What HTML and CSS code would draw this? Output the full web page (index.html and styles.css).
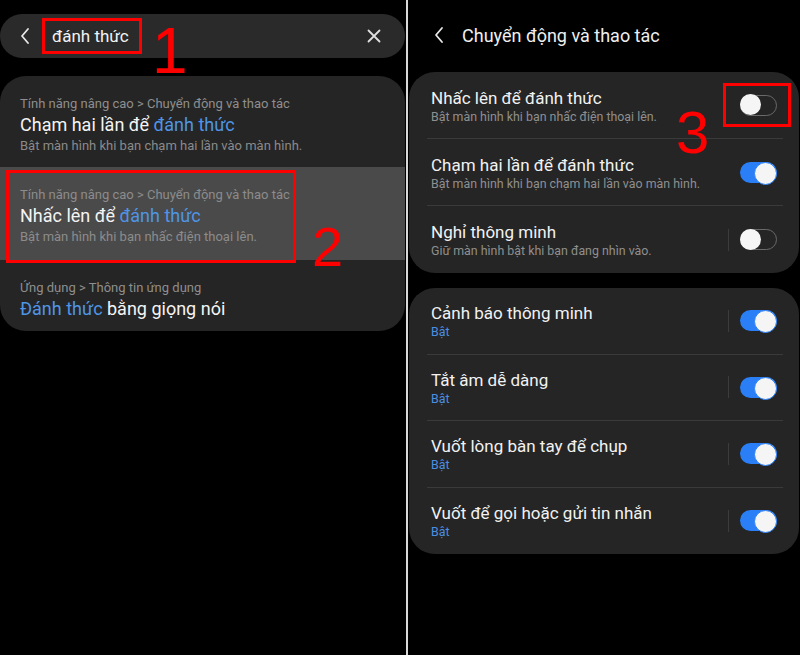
FILE: index.html
```html
<!DOCTYPE html>
<html lang="vi">
<head>
<meta charset="utf-8">
<title>Đánh thức</title>
<link rel="stylesheet" href="styles.css">
</head>
<body>
<div class="screen">
  <section class="pane left">
    <div class="search">
      <svg class="chev" width="12" height="18" viewBox="0 0 12 18"><path d="M9 2 L3 9 L9 16" fill="none" stroke="#e8e8e8" stroke-width="1.8" stroke-linecap="round" stroke-linejoin="round"/></svg>
      <span class="query">đánh thức</span>
      <svg class="close" width="14" height="14" viewBox="0 0 14 14"><path d="M1.5 1.5 L12.5 12.5 M12.5 1.5 L1.5 12.5" stroke="#e0e0e0" stroke-width="1.8" stroke-linecap="round"/></svg>
      <div class="mark mark1"></div>
      <span class="num num1">1</span>
    </div>
    <div class="results">
      <div class="result">
        <div class="crumb">Tính năng nâng cao &gt; Chuyển động và thao tác</div>
        <div class="rtitle">Chạm hai lần để <span class="hl">đánh thức</span></div>
        <div class="rsub">Bật màn hình khi bạn chạm hai lần vào màn hình.</div>
      </div>
      <div class="result active">
        <div class="crumb">Tính năng nâng cao &gt; Chuyển động và thao tác</div>
        <div class="rtitle">Nhấc lên để <span class="hl">đánh thức</span></div>
        <div class="rsub">Bật màn hình khi bạn nhấc điện thoại lên.</div>
        <div class="mark mark2"></div>
        <span class="num num2">2</span>
      </div>
      <div class="result last">
        <div class="crumb">Ứng dụng &gt; Thông tin ứng dụng</div>
        <div class="rtitle"><span class="hl">Đánh thức</span> bằng giọng nói</div>
      </div>
    </div>
  </section>
  <div class="divider"></div>
  <section class="pane right">
    <header class="head">
      <svg class="chev" width="12" height="18" viewBox="0 0 12 18"><path d="M9 2 L3 9 L9 16" fill="none" stroke="#e8e8e8" stroke-width="1.8" stroke-linecap="round" stroke-linejoin="round"/></svg>
      <h1>Chuyển động và thao tác</h1>
    </header>
    <div class="card">
      <div class="row">
        <div class="txt"><div class="title">Nhấc lên để đánh thức</div><div class="sub">Bật màn hình khi bạn nhấc điện thoại lên.</div></div>
        <div class="toggle off"></div>
        <div class="mark mark3"></div>
        <span class="num num3">3</span>
      </div>
      <div class="row">
        <div class="txt"><div class="title">Chạm hai lần để đánh thức</div><div class="sub">Bật màn hình khi bạn chạm hai lần vào màn hình.</div></div>
        <div class="toggle on"></div>
      </div>
      <div class="row">
        <div class="txt"><div class="title">Nghỉ thông minh</div><div class="sub">Giữ màn hình bật khi bạn đang nhìn vào.</div></div>
        <div class="sep"></div>
        <div class="toggle off"></div>
      </div>
    </div>
    <div class="card">
      <div class="row">
        <div class="txt"><div class="title">Cảnh báo thông minh</div><div class="sub blue">Bật</div></div>
        <div class="sep"></div>
        <div class="toggle on"></div>
      </div>
      <div class="row">
        <div class="txt"><div class="title">Tắt âm dễ dàng</div><div class="sub blue">Bật</div></div>
        <div class="sep"></div>
        <div class="toggle on"></div>
      </div>
      <div class="row">
        <div class="txt"><div class="title">Vuốt lòng bàn tay để chụp</div><div class="sub blue">Bật</div></div>
        <div class="sep"></div>
        <div class="toggle on"></div>
      </div>
      <div class="row">
        <div class="txt"><div class="title">Vuốt để gọi hoặc gửi tin nhắn</div><div class="sub blue">Bật</div></div>
        <div class="sep"></div>
        <div class="toggle on"></div>
      </div>
    </div>
  </section>
</div>
</body>
</html>
```
FILE: styles.css
```css
* { box-sizing: border-box; }
html, body { margin: 0; padding: 0; background: #000; }
body { font-family: Roboto, "Noto Sans", "Liberation Sans", sans-serif; color: #f0f0f0; }
.screen { width: 800px; height: 655px; display: flex; overflow: hidden; background: #000; }
.pane { position: relative; }
.left { width: 406px; padding-top: 14px; }
.divider { width: 2px; height: 655px; background: #d8d8d8; }
.right { width: 392px; padding: 0 1px; }

/* search bar */
.search { position: relative; height: 44px; width: 405px; background: #2a2a2a; border-radius: 22px; display: flex; align-items: center; padding: 0 24px 0 19px; }
.search .chev { flex: none; }
.query { margin-left: 21px; font-size: 17px; color: #f2f2f2; flex: 1; }
.close { flex: none; }

/* results card */
.results { margin-top: 18px; width: 405px; background: #252525; border-radius: 26px; overflow: hidden; }
.result { position: relative; padding: 19px 20px 12px; }
.result.active { background: #4a4a4a; padding-bottom: 14px; }
.result.last { padding-bottom: 10px; }
.crumb { font-size: 13px; line-height: 18px; color: #8e8e8e; }
.active .crumb, .active .rsub { color: #8c8c8c; }
.rtitle { font-size: 18px; line-height: 24px; color: #f4f4f4; }
.rsub { font-size: 13px; line-height: 18px; color: #8a8a8a; }
.hl { color: #4f95e6; }

/* right */
.head { height: 72px; display: flex; align-items: center; padding: 0 0 2px 24px; }
.head h1 { margin: 0 0 0 17px; font-size: 18px; font-weight: 400; color: #efefef; }
.card { background: #252525; border-radius: 26px; padding: 0 16px 0 18px; margin-bottom: 15px; }
.row { position: relative; height: 67px; display: flex; align-items: center; border-bottom: 1px solid #3a3a3a; }
.card .row:last-child { border-bottom: none; }
.card:last-child .row { height: 66.5px; }
.txt { flex: 1; padding-left: 4px; padding-top: 1px; }
.title { font-size: 17px; line-height: 22px; color: #f2f2f2; }
.sub { font-size: 12.4px; line-height: 16px; color: #8f8f8f; }
.sub.blue { color: #4a8fe2; }
.sep { width: 1px; height: 22px; background: #3c3c3c; margin-right: 11px; }
.toggle { position: relative; width: 37px; height: 21px; border-radius: 11px; margin-right: 6px; }
.toggle::after { content: ""; position: absolute; top: 0; width: 21px; height: 21px; border-radius: 50%; background: #f5f5f5; }
.toggle.on { background: #2a7ff6; }
.toggle.on::after { right: 0; border: 1.5px solid #2a7ff6; }
.toggle.off { border: 1.5px solid #6a6a6a; }
.toggle.off::after { left: -1.5px; top: -1.5px; }

/* annotations */
.mark { position: absolute; border: 3px solid #f00; }
.mark1 { left: 42px; top: 4px; width: 100px; height: 36px; }
.mark2 { left: 6px; top: 3px; width: 290px; height: 93px; }
.mark3 { left: 296px; top: 11px; width: 68px; height: 44px; }
.num { position: absolute; font-family: "Liberation Sans", Arial, sans-serif; color: #f00; line-height: 1; }
.num1 { left: 152px; top: 5px; font-size: 64px; }
.num2 { left: 312px; top: 52px; font-size: 56px; }
.num3 { left: 249px; top: 31px; font-size: 60px; }
```
